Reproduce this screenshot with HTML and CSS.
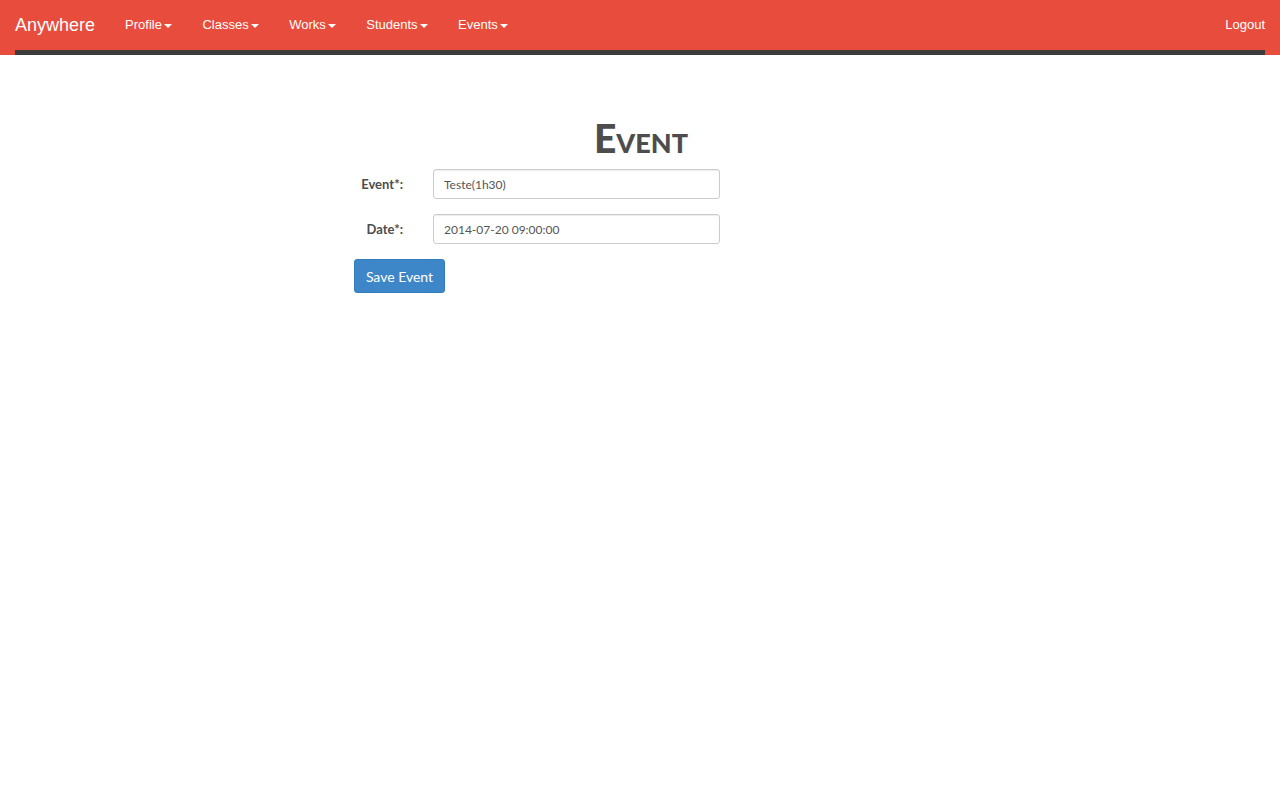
FILE: index.html
```html
<!DOCTYPE html>
<html>
<head>
<meta charset="utf-8">
<link rel="stylesheet" href="styles.css">
</head>
<body>
<header class="navbar">
  <div class="nav-inner">
    <a class="brand">Anywhere</a>
    <ul class="menu">
      <li>Profile<span class="caret"></span></li>
      <li>Classes<span class="caret"></span></li>
      <li>Works<span class="caret"></span></li>
      <li>Students<span class="caret"></span></li>
      <li>Events<span class="caret"></span></li>
    </ul>
    <a class="logout">Logout</a>
  </div>
  <div class="strip"></div>
</header>
<main class="content">
  <h1 class="title">Event</h1>
  <form class="form">
    <div class="row">
      <label class="label">Event*:</label>
      <input class="input" type="text" value="Teste(1h30)">
    </div>
    <div class="row">
      <label class="label">Date*:</label>
      <input class="input" type="text" value="2014-07-20 09:00:00">
    </div>
    <button class="btn" type="button">Save Event</button>
  </form>
</main>
</body>
</html>
```
FILE: styles.css
```css
* { box-sizing: border-box; }
html, body { margin: 0; padding: 0; background: #fff; }
body { font-family: Lato, "Open Sans", sans-serif; color: #555; }

.navbar { background: #e74c3c; height: 55px; padding: 0 15px; }
.nav-inner { display: flex; align-items: center; height: 50px; font-family: "Liberation Sans", Arial, sans-serif; color: #fff; }
.brand { font-size: 18px; padding-right: 15px; line-height: 50px; }
.menu { display: flex; list-style: none; margin: 0; padding: 0; flex: 1; }
.menu li { font-size: 13px; padding: 0 15px; line-height: 50px; }
.caret { display: inline-block; width: 0; height: 0; margin-left: 2.5px; vertical-align: middle; border-top: 4px solid #fff; border-left: 4px solid transparent; border-right: 4px solid transparent; }
.logout { font-size: 13px; line-height: 50px; }
.strip { height: 5px; background: #3c3c3c; }

.content { padding-top: 64px; }
.title { margin: 0; text-align: center; font-variant: small-caps; font-weight: 900; font-size: 39px; line-height: 39px; color: #4d4d4d; padding-left: 2px; }
.form { width: 366px; margin: 11px 0 0 354px; }
.row { display: flex; align-items: center; margin-bottom: 15px; }
.label { width: 49px; text-align: right; font-weight: bold; font-size: 13px; color: #4d4d4d; margin-right: 30px; }
.input { width: 287px; height: 30px; border: 1px solid #ccc; border-radius: 3px; padding: 0 10px; font-family: Lato, sans-serif; font-size: 12px; color: #555; box-shadow: inset 0 1px 1px rgba(0,0,0,0.075); }
.btn { display: block; width: 91px; height: 34px; background: #3d87c9; border: 1px solid #357ebd; border-radius: 3px; color: #fff; font-family: Lato, sans-serif; font-size: 14px; padding: 0; }
```
